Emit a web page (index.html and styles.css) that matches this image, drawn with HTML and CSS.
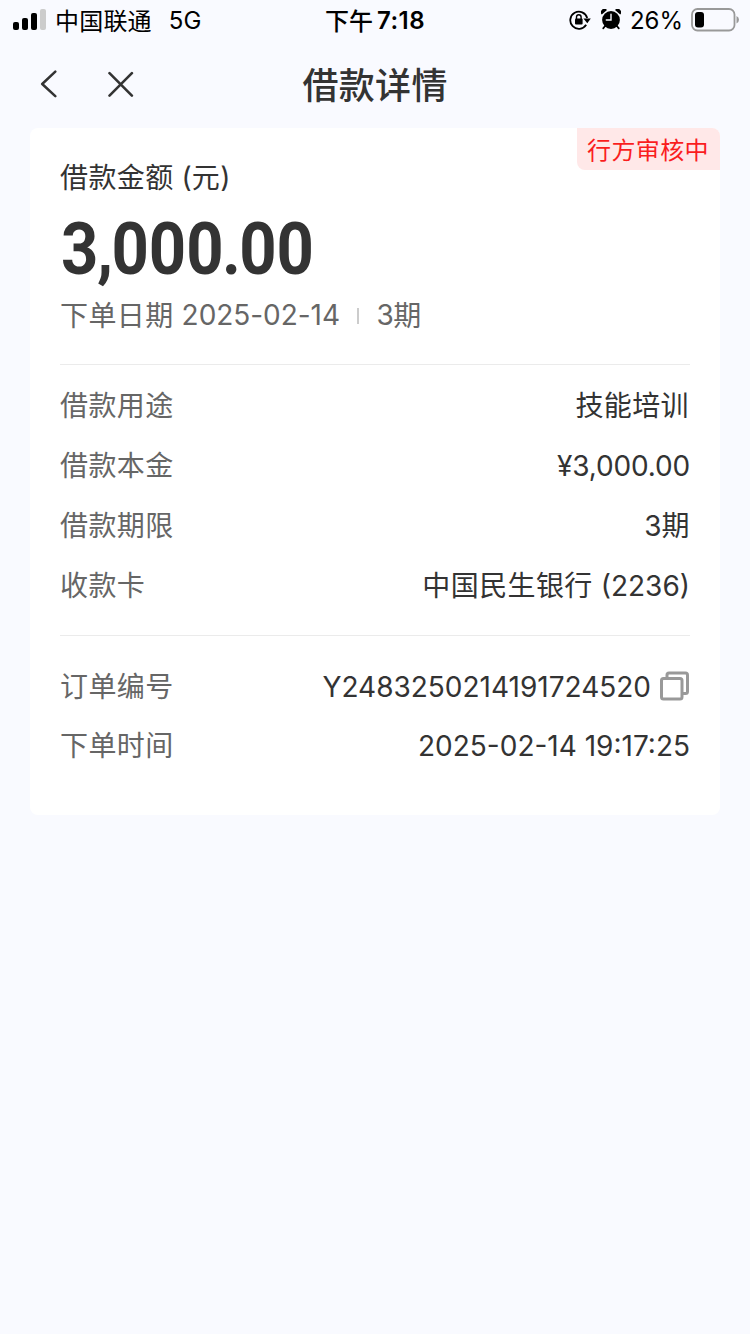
FILE: index.html
```html
<!DOCTYPE html>
<html lang="zh-CN">
<head>
<meta charset="utf-8">
<title>借款详情</title>
<link rel="stylesheet" href="styles.css">
</head>
<body>
<header class="status">
  <div class="status-left">
    <svg class="signal" width="34" height="22" viewBox="0 0 34 22"><rect x="0" y="13" width="6" height="8" rx="2"/><rect x="9" y="9" width="6" height="12" rx="2"/><rect x="18" y="4" width="6" height="17" rx="2"/><rect x="27" y="0" width="6" height="21" rx="2" fill="#ccc"/></svg>
    <span class="carrier">中国联通</span><span class="network">5G</span>
  </div>
  <div class="clock"><span class="clock-cjk">下午</span><span class="clock-num">7:18</span></div>
  <div class="status-right">
    <svg class="lock" width="22" height="20" viewBox="0 0 22 20"><path d="M17.2 14.8A8.6 8.6 0 1 1 18.2 8" fill="none" stroke="#000" stroke-width="1.8"/><path d="M14.4 8.4h7.4l-3.5 4.8z"/><rect x="6" y="8.6" width="7.6" height="6" rx="1"/><path d="M7.5 9V7a2.3 2.3 0 0 1 4.6 0v2" fill="none" stroke="#000" stroke-width="1.4"/></svg>
    <svg class="alarm" width="20" height="21" viewBox="0 0 20 21"><circle cx="10" cy="11" r="8.9"/><path d="M.8 5.6A3.4 3.4 0 0 1 6 .9zM19.2 5.6A3.4 3.4 0 0 0 14 .9z"/><path d="M4.5 16.5l-2.3 2.9M15.5 16.5l2.3 2.9" stroke="#000" stroke-width="1.7" stroke-linecap="round"/><path d="M10 5.3V11H5.3" fill="none" stroke="#f9faff" stroke-width="1.4" stroke-linecap="round"/></svg>
    <span class="percent">26%</span>
    <svg class="battery" width="48" height="24" viewBox="0 0 48 24"><rect x="1" y="1" width="42.5" height="21.5" rx="5.5" fill="none" stroke="#999" stroke-width="1.8"/><rect x="4" y="4" width="9" height="15.5" rx="3"/><path d="M45.5 8q2.5 1.2 2.5 3.8t-2.5 3.8z" fill="#999"/></svg>
  </div>
</header>
<nav class="nav">
  <svg class="back" width="18" height="28" viewBox="0 0 18 28"><path d="M15.3 1.6L2.2 14l13.1 12.2" fill="none" stroke="#333" stroke-width="2.5" stroke-linecap="round" stroke-linejoin="round"/></svg>
  <svg class="close" width="26" height="26" viewBox="0 0 26 26"><path d="M1.5 2.2l22.4 22.4M23.9 2.2L1.5 24.6" stroke="#333" stroke-width="2.6" stroke-linecap="round"/></svg>
  <h1 class="title">借款详情</h1>
</nav>
<main class="card">
  <div class="badge">行方审核中</div>
  <section class="summary">
    <div class="line caption"><span class="cjk">借款金额</span><span class="num paren">(</span><span class="cjk">元</span><span class="num">)</span></div>
    <div class="amount">3<span class="comma">,</span>000<span class="dot">.</span>00</div>
    <div class="line meta"><span class="cjk">下单日期</span><span class="num date">2025-02-14</span><i class="bar"></i><span class="num">3</span><span class="cjk">期</span></div>
  </section>
  <section class="details">
    <div class="row"><span class="label cjk">借款用途</span><span class="value cjk">技能培训</span></div>
    <div class="row"><span class="label cjk">借款本金</span><span class="value num yen">¥3,000.00</span></div>
    <div class="row"><span class="label cjk">借款期限</span><span class="value"><span class="num">3</span><span class="cjk">期</span></span></div>
    <div class="row"><span class="label cjk">收款卡</span><span class="value"><span class="cjk">中国民生银行</span><span class="num account">(2236)</span></span></div>
  </section>
  <section class="order">
    <div class="row"><span class="label cjk">订单编号</span><span class="value"><span class="num">Y2483250214191724520</span><svg class="copy" width="30" height="30" viewBox="0 0 30 30" fill="none" stroke="#999" stroke-width="3"><rect x="1.5" y="7.5" width="20.5" height="20.5" rx="2"/><path d="M7 7.5V4a2 2 0 0 1 2-2h16.5a2 2 0 0 1 2 2v16.5a2 2 0 0 1-2 2H22"/></svg></span></div>
    <div class="row last"><span class="label cjk">下单时间</span><span class="value num time">2025-02-14 19:17:25</span></div>
  </section>
</main>
</body>
</html>
```
FILE: styles.css
```css
* { box-sizing: border-box; }
body { margin: 0; min-height: 1334px; background: #f9faff; color: #333; font-family: Inter, "Noto Sans CJK SC", sans-serif; font-size: 28px; }
svg { display: block; flex: none; }
.status { height: 40px; display: grid; grid-template-columns: 1fr auto 1fr; align-items: center; color: #000; font-size: 24px; line-height: 40px; white-space: nowrap; padding: 0 11px 0 13px; }
.status-left, .status-right { display: flex; align-items: center; height: 40px; }
.status-left svg, .status-right svg { margin-bottom: 1px; }
.status-right { justify-content: flex-end; }
.carrier { margin-left: 8px; font: 24px/40px "Noto Sans CJK SC", sans-serif; letter-spacing: .2px; }
.network { margin-left: 17px; line-height: 38px; padding-top: 2px; }
.clock { display: flex; gap: 4px; font-weight: 600; }
.clock-cjk { margin-left: -2px; font-family: "Noto Sans CJK SC", sans-serif; font-weight: 500; }
.clock-num { line-height: 38px; padding-top: 2px; letter-spacing: .5px; }
.alarm { margin-left: 10px; }
.percent { margin-left: 9px; padding-top: 2px; line-height: 38px; }
.battery { margin-left: 8px; }
.nav { height: 88px; display: grid; grid-template-columns: 18px 26px 1fr; column-gap: 50px; align-items: center; padding: 0 40px; }
.title { margin: 0 0 0 118.5px; padding-bottom: 2px; font: 500 36px/48px "Noto Sans CJK SC", sans-serif; letter-spacing: .3px; }
.card { position: relative; width: 690px; height: 687px; margin: 0 auto; padding: 0 30px; background: #fff; border-radius: 8px; }
.badge { position: absolute; top: 0; right: 0; width: 143px; height: 42px; padding-left: 10px; border-radius: 0 8px 0 8px; background: #ffe8e8; color: #fa1e1e; font: 24px/41px "Noto Sans CJK SC", sans-serif; letter-spacing: .4px; white-space: nowrap; }
.summary { height: 237px; padding-top: 28px; border-bottom: 1px solid #ebebeb; }
.line, .row, .value { display: flex; align-items: center; white-space: nowrap; }
.line { height: 42px; line-height: 42px; }
.cjk { padding-bottom: 2px; font-family: "Noto Sans CJK SC", sans-serif; letter-spacing: .4px; }
.paren { margin-left: 8px; }
/* Condensed numerals with tightened separators */
.amount { display: flex; height: 84px; width: max-content; margin: 9px 0 0 1px; font: 700 73px/84px Roboto, sans-serif; transform: scaleX(.893); transform-origin: 0 50%; }
.comma, .dot { display: flex; justify-content: center; }
.comma { width: 14.6px; }
.dot { width: 17.4px; }
.meta { margin-top: 3px; color: #666; }
.date { margin-left: 8px; letter-spacing: -.05px; }
.bar { width: 2px; height: 16px; margin: 2px 17.5px 0 17px; background: #ccc; }
.meta .bar + .num { letter-spacing: -.6px; }
.details { height: 271px; padding-top: 10px; border-bottom: 1px solid #ebebeb; }
.order { padding-top: 20px; }
.row { height: 60px; justify-content: space-between; }
.value.cjk { padding-right: 1px; }
.row .num { padding-top: 1px; }
.label { color: #666; }
.yen { letter-spacing: -.15px; }
.account { margin-left: 8px; }
.copy { margin-left: 9px; }
.last { height: 58px; }
```
